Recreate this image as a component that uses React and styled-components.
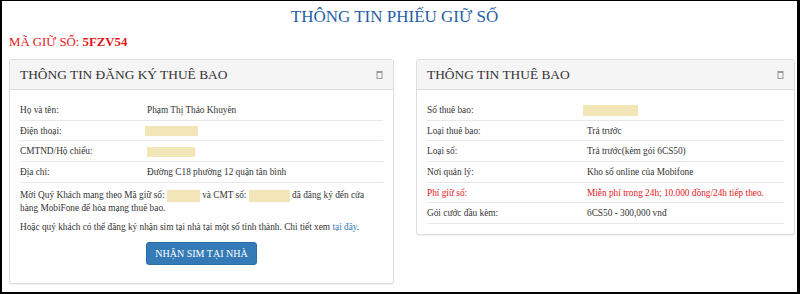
import React from "react";
import styled, {createGlobalStyle} from "styled-components";

const GlobalStyle = createGlobalStyle`
  html, body {
    margin: 0;
    padding: 0;
    background: #fff;
  }
`;

const serif = `"Liberation Serif", "Times New Roman", Times, serif`;

const Frame = styled.div`
  width: 800px;
  height: 294px;
  box-sizing: border-box;
  border-style: solid;
  border-color: #000;
  border-width: 1px 3px 2px 2px;
  background: #fff;
  overflow: hidden;
  font-family: ${serif};
  color: #333;
`;

const Title = styled.h1`
  margin: 0;
  padding: 6px 10px 0 0;
  text-align: center;
  font-family: ${serif};
  font-size: 17px;
  line-height: 20px;
  font-weight: normal;
  color: #1f5fa6;
`;

const HoldCode = styled.div`
  padding-left: 7px;
  margin-top: 7px;
  font-size: 12.8px;
  line-height: 16px;
  color: #e3161b;

  b {
    font-weight: bold;
  }
`;

const Columns = styled.div`
  display: flex;
  align-items: flex-start;
  gap: 22px;
  margin-top: 9px;
  padding: 0 2px 0 7px;
`;

const Panel = styled.div`
  box-sizing: border-box;
  width: ${(p) => p.$width || "auto"};
  flex: ${(p) => (p.$width ? "none" : "1")};
  border: 1px solid #ddd;
  border-radius: 3px;
  box-shadow: 0 1px 1px rgba(0, 0, 0, 0.06);
  background: #fff;
`;

const PanelHeading = styled.div`
  height: 29px;
  display: flex;
  align-items: center;
  justify-content: space-between;
  padding: 0 10px;
  background: #f5f5f5;
  border-bottom: 1px solid #ddd;
  border-radius: 3px 3px 0 0;
  font-size: 13.4px;
  color: #333;
`;

const PanelBody = styled.div`
  padding: 10px 10px ${(p) => p.$bottom || "10px"};
`;

const Row = styled.div`
  display: grid;
  grid-template-columns: ${(p) => p.$label} 1fr;
  align-items: center;
  height: 19.7px;
  border-bottom: 1px solid #e8e8e8;
  font-size: 9.3px;
  color: ${(p) => (p.$alert ? "#e3161b" : "#333")};
`;

const Hidden = styled.span`
  display: inline-block;
  vertical-align: middle;
  width: ${(p) => p.$w}px;
  height: ${(p) => p.$h || 11}px;
  margin-left: ${(p) => p.$ml || 0}px;
  background: #f2e5b7;
`;

const Note = styled.p`
  margin: ${(p) => p.$margin};
  font-size: 9.3px;
  line-height: 12.5px;
  color: #333;
  white-space: nowrap;

  a {
    color: #337ab7;
    text-decoration: none;
  }
`;

const ButtonRow = styled.div`
  display: flex;
  justify-content: center;
  margin-top: 8px;
`;

const Button = styled.button`
  height: 23px;
  width: 111px;
  padding: 0;
  border: 1px solid #2e6da4;
  border-radius: 3px;
  background: #337ab7;
  color: #fff;
  font-family: ${serif};
  font-size: 10px;
  cursor: pointer;
`;

const ToggleIcon = () => (
    <svg width="7" height="10" viewBox="0 0 7 10">
        <rect x="1" y="1.5" width="5" height="7" fill="none" stroke="#9a9a9a" strokeWidth="1"/>
        <line x1="1" y1="2.5" x2="6" y2="2.5" stroke="#9a9a9a" strokeWidth="1"/>
    </svg>
);

const registerRows = [
    {label: "Họ và tên:", value: "Phạm Thị Thảo Khuyên"},
    {label: "Điện thoại:", value: <Hidden $w={53} $h={10} $ml={-2}/>},
    {label: "CMTND/Hộ chiếu:", value: <Hidden $w={48} $h={10}/>},
    {label: "Địa chỉ:", value: "Đường C18 phường 12 quận tân bình"},
];

const subscriberRows = [
    {label: "Số thuê bao:", value: <Hidden $w={55} $h={11} $ml={-4}/>},
    {label: "Loại thuê bao:", value: "Trả trước"},
    {label: "Loại số:", value: "Trả trước(kèm gói 6CS50)"},
    {label: "Nơi quản lý:", value: "Kho số online của Mobifone"},
    {label: "Phí giữ số:", value: "Miễn phí trong 24h; 10.000 đồng/24h tiếp theo.", alert: true},
    {label: "Gói cước đầu kèm:", value: "6CS50 - 300,000 vnđ"},
];

const App = () => {
    return (
        <Frame>
            <GlobalStyle/>
            <Title>THÔNG TIN PHIẾU GIỮ SỐ</Title>
            <HoldCode>MÃ GIỮ SỐ: <b>5FZV54</b></HoldCode>
            <Columns>
                <Panel $width={"385px"}>
                    <PanelHeading>
                        <span>THÔNG TIN ĐĂNG KÝ THUÊ BAO</span>
                        <ToggleIcon/>
                    </PanelHeading>
                    <PanelBody $bottom={"18px"}>
                        {registerRows.map((r) => (
                            <Row key={r.label} $label={"127px"}>
                                <span>{r.label}</span>
                                <span>{r.value}</span>
                            </Row>
                        ))}
                        <Note $margin={"6px 0 0"}>
                            Mời Quý Khách mang theo Mã giữ số: <Hidden $w={33} $h={12}/> và CMT
                            số: <Hidden $w={41} $h={12}/> đã đăng ký đến cửa
                            <br/>
                            hàng MobiFone để hòa mạng thuê bao.
                        </Note>
                        <Note $margin={"7px 0 0"}>
                            Hoặc quý khách có thể đăng ký nhận sim tại nhà tại một số tỉnh thành. Chi tiết
                            xem <a href="#">tại đây</a>.
                        </Note>
                        <ButtonRow>
                            <Button>NHẬN SIM TẠI NHÀ</Button>
                        </ButtonRow>
                    </PanelBody>
                </Panel>
                <Panel>
                    <PanelHeading>
                        <span>THÔNG TIN THUÊ BAO</span>
                        <ToggleIcon/>
                    </PanelHeading>
                    <PanelBody>
                        {subscriberRows.map((r) => (
                            <Row key={r.label} $label={"160px"} $alert={r.alert}>
                                <span>{r.label}</span>
                                <span>{r.value}</span>
                            </Row>
                        ))}
                    </PanelBody>
                </Panel>
            </Columns>
        </Frame>
    );
};

export default App;
